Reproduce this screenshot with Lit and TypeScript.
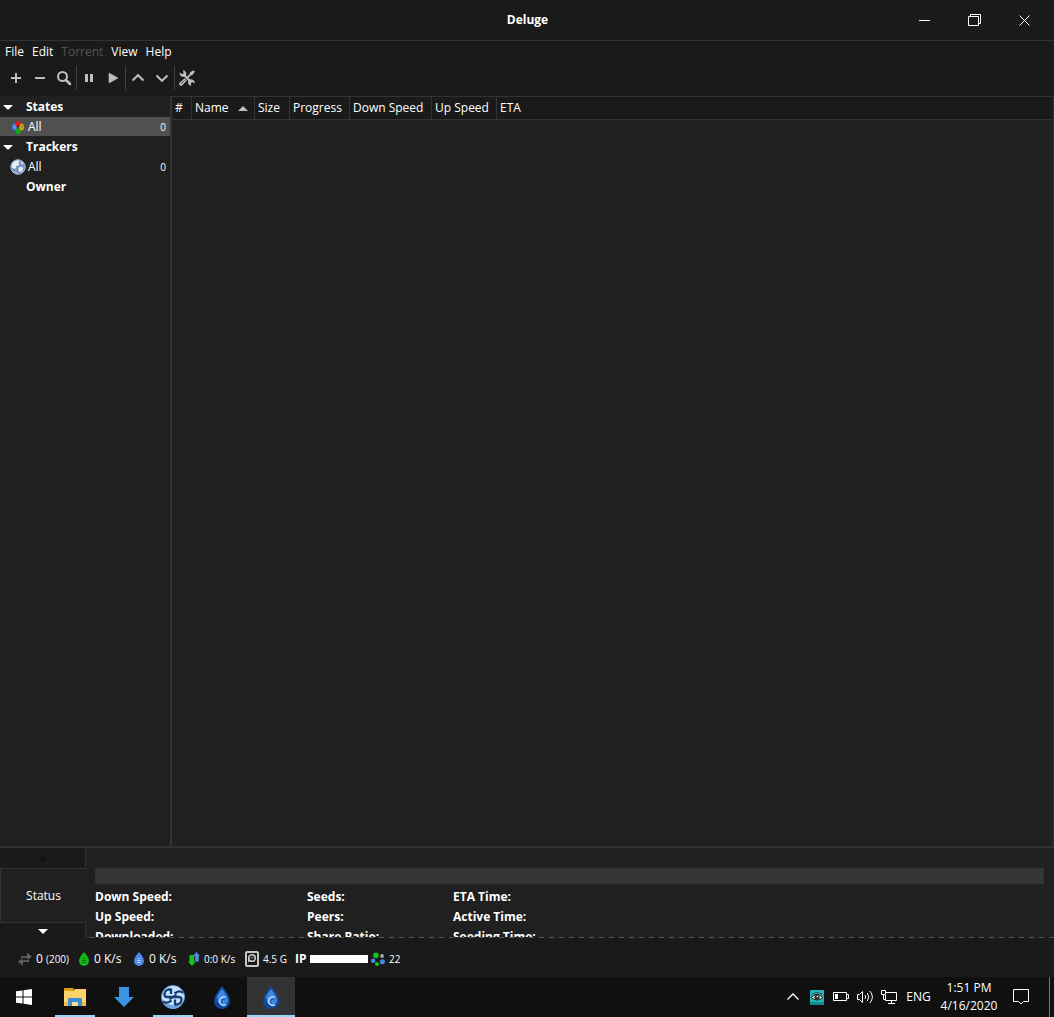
import { LitElement, html, css, svg, TemplateResult } from "lit";
import { customElement } from "lit/decorators.js";
import { classMap } from "lit/directives/class-map.js";

const shared = css`
  :host, * { box-sizing: border-box; }
  button {
    font: inherit; color: inherit; background: none; border: 0; padding: 0; margin: 0;
    display: flex; align-items: center; justify-content: center;
  }
  svg { display: block; flex: none; }
  button:hover { background: #2d2d2d; }
`;

const icon = (w: number, h: number, body: unknown): TemplateResult =>
  html`<svg width=${w} height=${h} viewBox="0 0 ${w} ${h}" fill="none" aria-hidden="true">${body}</svg>`;

const tri = (dir: "up" | "down", color: string) =>
  icon(10, 5, svg`<path d=${dir === "up" ? "M0 5L5 0L10 5Z" : "M0 0H10L5 5Z"} fill=${color}/>`);

const icons = {
  minimize: icon(11, 11, svg`<path d="M0 5.5H11" stroke="#fff"/>`),
  restore: icon(13, 12, svg`<path d="M.5 2.5H10.500V11.500H.5ZM2.500 2V.5H12.500V9.500H11" stroke="#fff"/>`),
  close: icon(11, 11, svg`<path d="M.5 .5L10.500 10.500M10.500 .5L.5 10.500" stroke="#fff"/>`),
  add: icon(16, 16, svg`<path d="M3 8H13M8 3V13" stroke="#bebebe" stroke-width="2"/>`),
  remove: icon(16, 16, svg`<path d="M3 8H13" stroke="#bebebe" stroke-width="2"/>`),
  search: icon(16, 16, svg`<circle cx="6.500" cy="6.500" r="4.500" stroke="#bebebe" stroke-width="2"/><path d="M10 10L14 14" stroke="#bebebe" stroke-width="2.500" stroke-linecap="round"/>`),
  pause: icon(16, 16, svg`<path d="M4 4H7V12H4ZM9 4H12V12H9Z" fill="#bebebe"/>`),
  play: icon(16, 16, svg`<path d="M4 3L13 8L4 13Z" fill="#bebebe" stroke="#bebebe" stroke-width=".6" stroke-linejoin="round"/>`),
  up: icon(16, 16, svg`<path d="M2.500 10.500L8 5.200L13.500 10.500" stroke="#bebebe" stroke-width="2"/>`),
  down: icon(16, 16, svg`<path d="M2.500 5.500L8 10.800L13.500 5.500" stroke="#bebebe" stroke-width="2"/>`),
  tools: icon(16, 16, svg`
    <path d="M4.500 4.500L12.500 12.500" stroke="#bebebe" stroke-width="2.200"/>
    <path d="M.6 2.600A3.700 3.700 0 0 0 6.800 5.800A3.700 3.700 0 0 0 4 .2L4.600 3.200L3.200 4.300Z" fill="#bebebe"/>
    <path d="M15.700 13.500A3.700 3.700 0 0 0 9.800 10A3.700 3.700 0 0 0 12.300 16L11.800 13L13.200 12Z" fill="#bebebe"/>
    <path d="M15.800 1.800L14.200 .2L11 2.600L10.600 4.200L7 7.800L8.200 9L11.800 5.400L13.400 5Z" fill="#bebebe"/>
    <path d="M5.600 8.200L7.800 10.400L3.400 15.200Q1.800 16.300 .6 15.200Q-.4 14 .8 12.600Z" fill="#bebebe"/>
    <path d="M2 13.900L5.800 10.200" stroke="#1a1a1a" stroke-width=".7"/>`),
  states: icon(12, 14, svg`
    <ellipse cx="2.600" cy="7" rx="2.500" ry="3.500" fill="#3f7ae0"/>
    <path d="M1.800 5.500V8.500M3.200 5.500V8.500" stroke="#9cc0ff" stroke-width=".6"/>
    <ellipse cx="9.400" cy="7" rx="2.500" ry="3.500" fill="#c9b414"/>
    <path d="M8.900 8.500L10.200 5.800" stroke="#5d5408" stroke-width=".8"/>
    <path d="M6 0Q9 3 8.500 5Q8 7 6 7T3.500 5Q3 3 6 0Z" fill="#e01b12"/>
    <path d="M6 7Q9 10 8.500 12Q8 14 6 14T3.500 12Q3 10 6 7Z" fill="#11b011"/>
    <path d="M6 5V9M4.800 6.600H7.200" stroke="#452020" stroke-width=".8"/>`),
  globe: icon(16, 16, svg`
    <circle cx="8" cy="8" r="7.200" fill="#6d8fbe" stroke="#b9cbe4"/>
    <path d="M1.800 5.500Q4 1.500 8 1.200L9.500 2.500L8.500 4.500L9.500 5.500L7.500 7L5.500 7L6.500 9L4.500 10L2 8.500Z" fill="#e9eef6"/>
    <path d="M8.500 8.500L11 7.500L13.500 9Q12.800 12.500 10 13.500L8.500 11.500Z" fill="#e6ebf3"/>
    <path d="M11 2.500L14 5.500L12 5.500L10.500 4Z" fill="#dbe4f0"/>
    <path d="M3 11.500Q5 14.500 8 14.600L6.500 12.500Z" fill="#a9bfdc"/>`),
  swap: icon(14, 14, svg`<path d="M3 6.500V4.200H9V.5L14 4.700L9 8V6H5Z" fill="#606060"/><path d="M11 7.500V10H5V13.700L0 9.500L5 6.200V8.200H9Z" fill="#606060"/><path d="M4.500 7.100H9.500" stroke="#1a1a1a" stroke-width="1.400"/>`),
  disk: icon(14, 16, svg`<rect x="1" y="1" width="12" height="14" rx="1" stroke="#c8c8c8" stroke-width="2"/><circle cx="7" cy="7" r="3.300" stroke="#c8c8c8" stroke-width="1.600"/><path d="M3.700 11V7" stroke="#c8c8c8" stroke-width="1.400"/><path d="M5.500 7H8V5.500" stroke="#888"/>`),
  traffic: icon(12, 14, svg`<path d="M8.500 0L12 4H10.800V9.500H6.800V4H5Z" fill="#4a8ae6"/><path d="M1.500 3H6V9.500H8L4 14L0 9.500H1.500Z" fill="#16c41e"/>`),
  dht: icon(14, 14, svg`<circle cx="5" cy="3.200" r="2.800" fill="#16c41e"/><circle cx="11" cy="4" r="1.900" fill="#a8a8a8"/><circle cx="2.200" cy="8.800" r="2.200" fill="#4a8ae6"/><circle cx="11.400" cy="9.800" r="2.500" fill="#4a8ae6"/><circle cx="6" cy="12" r="2" fill="#16c41e"/>`),
  start: icon(16, 16, svg`<path d="M0 2.300L6.500 1.400V7.500H0ZM7.500 1.200L16 0V7.500H7.500ZM0 8.500H6.500V14.600L0 13.700ZM7.500 8.500H16V16L7.500 14.800Z" fill="#fff"/>`),
  explorer: icon(22, 19, svg`
    <path d="M0 3H9L11 1H22V18H0Z" fill="#ffd36b"/><path d="M0 1Q0 0 1 0H9L10 1L9 3H0Z" fill="#e0a014"/>
    <path d="M0 14H22V18H0Z" fill="#f5bd45"/>
    <path d="M4 18V11Q4 10 5 10H17Q18 10 18 11V18H14V14H8V18Z" fill="#3a8fd6"/><path d="M8 18V14H14V18Z" fill="#f9da90"/>`),
  arrow: icon(20, 20, svg`<path d="M5 0H15V10H20L10 20L0 10H5Z" fill="#3a94e4"/>`),
  qb: icon(24, 24, svg`
    <circle cx="12" cy="12" r="11.500" fill="#c9e2fc" stroke="#5c9ad8"/>
    <path d="M.8 14A11.500 11.500 0 0 0 20 20.500L14 21L7 19Z" fill="#6da5e2"/>
    <path d="M10 4.500H7.500Q3.500 5.500 3.500 9.500Q3.500 12 6 12H17.500Q20.500 12 20.500 14.500Q20.500 18.500 16.500 19.500H14" stroke="#123f74" stroke-width="2.300"/>
    <path d="M10 3.500V9M14 14.500V20.500M2 16.500Q4.500 18.500 8 17L10.500 15.500M13.500 8.500L16 7Q19.500 5.500 22 8" stroke="#123f74" stroke-width="2.300"/>
    <path d="M8.500 14.500L15.500 9.500" stroke="#123f74" stroke-width="2"/>`),
  chevron: icon(12, 12, svg`<path d="M.5 8.500L6 3L11.500 8.500" stroke="#fff" stroke-width="1.300"/>`),
  eye: icon(14, 15, svg`<rect width="14" height="15" rx="1" fill="#25b6bd"/><path d="M0 12H14V14L13 15H1L0 14Z" fill="#168b95"/><path d="M1 7.500Q7 1.500 13 7.500Q7 12.500 1 7.500Z" fill="#d9e8e8" stroke="#222"/><circle cx="7" cy="7.200" r="2.500" fill="#252525"/><circle cx="7.400" cy="6.600" r=".9" fill="#eee"/><path d="M1.500 4.500Q7 1 12.500 4.500" stroke="#234b4d"/>`),
  battery: icon(16, 10, svg`<path d="M.5 .5H13.500V8.500H.5ZM14 2.500H15.500V6.500H14" stroke="#fff"/><path d="M2 2H5V7H2Z" fill="#fff"/>`),
  speaker: icon(17, 14, svg`<path d="M.5 4.500H2.500L5.500 1.500V12.500L2.500 9.500H.5Z" stroke="#fff"/><path d="M8 5Q9.500 7 8 9M10.300 3Q13.300 7 10.300 11M12.800 1Q18 7 12.800 13" stroke="#fff"/>`),
  network: icon(16, 14, svg`<path d="M5 2.500H15.500V10.500H4.500V5M10.500 11V13.500M7 13.500H14M.5 .5H4.500V4.500H.5ZM2.500 5V9.500H4" stroke="#fff"/>`),
  notice: icon(16, 16, svg`<path d="M.5 .5H15.500V12.500H10.500L8 15L5.500 12.500H.5Z" stroke="#fff"/>`),
};

const speedDrop = (fill: string, dark: string) =>
  icon(12, 14, svg`<path d="M6 0Q11 5.500 11 9A5 5 0 0 1 1 9Q1 5.500 6 0Z" fill=${fill}/><path d="M5 6.500H7.500M4 8.500H8M4 10.500H8" stroke=${dark}/>`);

const deluge = icon(18, 23, svg`
  <path d="M9 0Q17 10 17 15A8 8 0 0 1 1 15Q1 10 9 0Z" fill="#104a9b"/>
  <path d="M9 3Q15 10.500 15 14Q15 17 12.500 19Q5 19 3 15Q3 10 9 3Z" fill="#3f87e0"/>
  <path d="M12.500 11.300A4.200 4.200 0 1 0 13 18.700" stroke="#b9dcff" stroke-width="1.500"/>
  <path d="M12.500 13A3 3 0 0 0 9 17.500" stroke="#1d5cb4" stroke-width="1.200"/>
  <path d="M4 12.500Q3 17 8 20.500" stroke="#0d3c82" stroke-width="1.300"/>`);

@customElement("window-header")
export class WindowHeader extends LitElement {
  static styles = [shared, css`
    :host { display: block; color: #fff; background: #1a1a1a; }
    .title {
      display: grid; grid-template-columns: 1fr auto 1fr; align-items: stretch;
      height: 41px; border-bottom: 1px solid #333; padding-right: 5px;
    }
    h1 { margin: 0; font-size: 12px; line-height: 40px; font-weight: 700; grid-column: 2; padding-left: 6px; }
    .controls { display: flex; justify-content: flex-end; }
    .controls button { width: 50px; }
    .menu { display: flex; height: 21px; gap: 8px; padding: 0 5px; }
    .menu button:disabled { color: #555; }
    .tools { display: flex; align-items: center; height: 34px; padding: 0 4px 2px; }
    .tools button { width: 24px; height: 24px; }
    .sep { width: 1px; height: 24px; background: #3f3f3f; flex: none; }
  `];
  render() {
    const tool = (label: string, pic: TemplateResult) => html`<button aria-label=${label}>${pic}</button>`;
    return html`
      <header class="title">
        <h1>Deluge</h1>
        <div class="controls">
          ${tool("Minimize", icons.minimize)}${tool("Restore", icons.restore)}${tool("Close", icons.close)}
        </div>
      </header>
      <nav class="menu">
        ${["File", "Edit", "Torrent", "View", "Help"].map(
          (name) => html`<button ?disabled=${name === "Torrent"}>${name}</button>`)}
      </nav>
      <div class="tools" role="toolbar">
        ${tool("Add torrent", icons.add)}${tool("Remove torrent", icons.remove)}${tool("Filter", icons.search)}
        <span class="sep"></span>
        ${tool("Pause", icons.pause)}${tool("Resume", icons.play)}
        <span class="sep"></span>
        ${tool("Queue up", icons.up)}${tool("Queue down", icons.down)}
        <span class="sep"></span>
        ${tool("Preferences", icons.tools)}
      </div>`;
  }
}

@customElement("filter-sidebar")
export class FilterSidebar extends LitElement {
  static styles = [shared, css`
    :host { display: block; width: 172px; flex: none; background: #202020; border-right: 2px solid #333; padding-top: 1px; color: #fff; }
    .row { display: flex; width: 100%; height: 20px; align-items: center; justify-content: flex-start; line-height: 20px; }
    .group { font-weight: 700; }
    .twist { width: 26px; padding-left: 3px; }
    .pic { width: 28px; display: flex; justify-content: center; padding-left: 8px; }
    .selected, .selected:hover { background: linear-gradient(#505050 19px, transparent 19px); }
    .count { margin-left: auto; padding-right: 4px; font-size: 10px; }
  `];
  private group(name: string, open = true) {
    return html`<button class="row group"><span class="twist">${open ? tri("down", "#fff") : ""}</span>${name}</button>`;
  }
  private item(name: string, pic: TemplateResult, selected = false) {
    return html`<button class=${classMap({ row: true, selected })}>
      <span class="pic">${pic}</span>${name}<span class="count">0</span></button>`;
  }
  render() {
    return html`
      ${this.group("States")}${this.item("All", icons.states, true)}
      ${this.group("Trackers")}${this.item("All", icons.globe)}
      ${this.group("Owner", false)}`;
  }
}

@customElement("torrent-list")
export class TorrentList extends LitElement {
  static styles = [shared, css`
    :host { display: block; flex: 1; min-width: 0; background: #202020; color: #fff; border-right: 1px solid #333; }
    table { width: 100%; table-layout: fixed; border-collapse: separate; border-spacing: 0; }
    th {
      height: 24px; padding: 0 0 0 3px; font-weight: 400; text-align: left; white-space: nowrap;
      background: #1a1a1a; border: 0 solid #333; border-width: 1px 1px 1px 0;
    }
    th:last-child { border-right: 0; }
    .head { display: flex; align-items: center; justify-content: space-between; padding-right: 6px; }
    .num { width: 20px; } .name { width: 63px; } .size { width: 35px; }
    .progress { width: 60px; } .down { width: 82px; } .upload { width: 65px; }
  `];
  render() {
    return html`<table>
      <thead><tr>
        <th class="num">#</th>
        <th class="name" aria-sort="ascending"><div class="head">Name ${tri("up", "#bebebe")}</div></th>
        <th class="size">Size</th><th class="progress">Progress</th>
        <th class="down">Down Speed</th><th class="upload">Up Speed</th><th>ETA</th>
      </tr></thead><tbody></tbody></table>`;
  }
}

@customElement("torrent-details")
export class TorrentDetails extends LitElement {
  static styles = [shared, css`
    :host { display: flex; height: 92px; flex: none; background: #202020; color: #fff; border-top: 2px solid #333; overflow: hidden; }
    .tabs { width: 86px; flex: none; display: flex; flex-direction: column; }
    .scroll { height: 20px; background: #1a1a1a; border-right: 1px solid #333; }
    .scroll.more { height: 15px; padding-top: 2px; }
    .tab { height: 55px; border: 1px solid #333; border-right: 0; }
    .panel {
      flex: 1; min-width: 0; position: relative; padding: 20px 10px 0 9px;
    }
    .panel::after {
      content: ""; position: absolute; left: 0; right: 0; bottom: 0; height: 1px;
      background: repeating-linear-gradient(90deg, #202020 0 3px, #555 3px 8px, #202020 8px 10px);
    }
    progress { display: block; width: 100%; height: 16px; appearance: none; border: 1px solid #303030; background: #363636; }
    progress::-webkit-progress-bar { background: #363636; }
    .facts {
      display: grid; grid-template-columns: 212px 146px 1fr; grid-auto-rows: 20px;
      height: 54px; overflow: hidden; margin: 0; padding-top: 3px; line-height: 20px; font-weight: 700;
    }
  `];
  render() {
    return html`
      <div class="tabs">
        <button class="scroll" aria-label="Previous tab">${tri("up", "#101010")}</button>
        <button class="tab">Status</button>
        <button class="scroll more" aria-label="Next tab">${tri("down", "#fff")}</button>
      </div>
      <section class="panel">
        <progress value="0" max="100" aria-label="Torrent progress"></progress>
        <div class="facts">
          ${["Down Speed:", "Seeds:", "ETA Time:", "Up Speed:", "Peers:", "Active Time:",
             "Downloaded:", "Share Ratio:", "Seeding Time:"].map((label) => html`<span>${label}</span>`)}
        </div>
      </section>`;
  }
}

@customElement("status-bar")
export class StatusBar extends LitElement {
  static styles = [shared, css`
    :host { display: flex; height: 39px; flex: none; align-items: center; background: #1a1a1a; color: #fff; padding: 3px 0 0 18px; white-space: nowrap; }
    .item { display: flex; align-items: center; justify-content: flex-start; gap: 4px; height: 20px; }
    .peers { width: 60px; } .speed { width: 55px; } .traffic { width: 57px; }
    .disk { width: 50px; } .ip { width: 76px; }
    .small { font-size: 10px; }
    .ip { font-weight: 700; gap: 3px; }
    .mask { width: 58px; height: 8px; background: #fff; }
  `];
  render() {
    return html`
      <button class="item peers">${icons.swap}<span>0 <span class="small">(200)</span></span></button>
      <button class="item speed">${speedDrop("#14b81b", "#0a6810")}0 K/s</button>
      <button class="item speed">${speedDrop("#4d88f0", "#b8d2ff")}0 K/s</button>
      <span class="item traffic small">${icons.traffic}0:0 K/s</span>
      <span class="item disk small">${icons.disk}4.5 G</span>
      <span class="item ip">IP<span class="mask"></span></span>
      <span class="item small">${icons.dht}22</span>`;
  }
}

@customElement("desktop-taskbar")
export class DesktopTaskbar extends LitElement {
  static styles = [shared, css`
    :host { display: flex; height: 40px; flex: none; background: #101010; color: #fff; }
    .apps { display: flex; gap: 1px; }
    .app { width: 48px; height: 40px; }
    .start { margin-right: 2px; }
    .running { background: linear-gradient(#9bd4f5, #9bd4f5) center bottom / 40px 2px no-repeat; }
    .active { background: linear-gradient(#9bd4f5, #9bd4f5) center bottom / 48px 2px no-repeat #333; }
    .tray { display: flex; margin-left: auto; }
    .tray button { width: 24px; }
    .tray .lang { width: 35px; }
    .tray .clock { width: 66px; flex-direction: column; line-height: 18px; white-space: nowrap; }
    .tray .notice { width: 38px; margin-right: 9px; }
    .tray .desk { width: 5px; border-left: 1px solid #777; }
  `];
  render() {
    const app = (label: string, pic: TemplateResult, cls = "") =>
      html`<button class="app ${cls}" aria-label=${label}>${pic}</button>`;
    return html`
      <nav class="apps">
        ${app("Start", icons.start, "start")}${app("File Explorer", icons.explorer, "running")}
        ${app("Downloads", icons.arrow)}${app("qBittorrent", icons.qb, "running")}
        ${app("Deluge", deluge)}${app("Deluge window", deluge, "active")}
      </nav>
      <div class="tray">
        <button aria-label="Show hidden icons">${icons.chevron}</button>
        <button aria-label="Watcher">${icons.eye}</button>
        <button aria-label="Battery">${icons.battery}</button>
        <button aria-label="Volume">${icons.speaker}</button>
        <button aria-label="Network">${icons.network}</button>
        <button class="lang">ENG</button>
        <button class="clock"><span>1:51 PM</span><span>4/16/2020</span></button>
        <button class="notice" aria-label="Notifications">${icons.notice}</button>
        <button class="desk" aria-label="Show desktop"></button>
      </div>`;
  }
}

@customElement("app-root")
export class AppRoot extends LitElement {
  static styles = css`
    :host {
      display: flex; flex-direction: column; min-height: 100vh; background: #1a1a1a;
      font-family: "Open Sans", "Noto Sans", sans-serif; font-size: 12px; line-height: 16px;
    }
    .main { display: flex; flex: 1; }
  `;
  render() {
    return html`
      <window-header></window-header>
      <main class="main">
        <filter-sidebar></filter-sidebar>
        <torrent-list></torrent-list>
      </main>
      <torrent-details></torrent-details>
      <status-bar></status-bar>
      <desktop-taskbar></desktop-taskbar>`;
  }
}
